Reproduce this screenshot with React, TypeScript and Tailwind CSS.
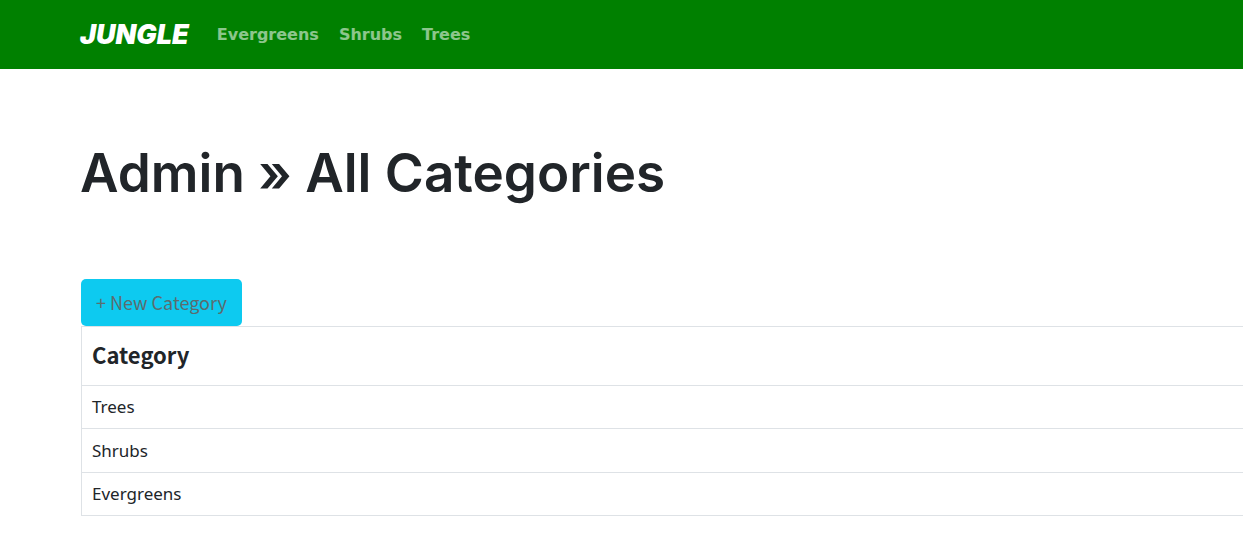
const navLinks = ["Evergreens", "Shrubs", "Trees"];
const categories = ["Trees", "Shrubs", "Evergreens"];

export default function App() {
  return (
    <div className="min-h-screen overflow-x-hidden bg-white font-['Noto_Sans',sans-serif] text-[17px] leading-[26px] text-[#212529]">
      <nav
        aria-label="Main"
        className="flex h-[69px] items-center bg-[#008000] pl-20"
      >
        <a
          href="#"
          className="mr-7 font-['Inter','Lato',sans-serif] text-[27px] font-black text-white italic"
        >
          JUNGLE
        </a>
        <ul className="flex gap-5 font-['DejaVu_Sans',sans-serif] text-base font-bold text-white/55">
          {navLinks.map((name) => (
            <li key={name}>
              <a href="#">{name}</a>
            </li>
          ))}
        </ul>
      </nav>

      <main className="pl-20">
        <header className="pt-[74px] pb-[76px]">
          <h1 className="font-['Inter',sans-serif] text-[53px] leading-[60px] font-semibold whitespace-nowrap">
            Admin » All Categories
          </h1>
        </header>

        <div className="pl-px">
          <button
            type="button"
            className="block h-[47px] rounded-[5px] bg-[#0dcaf0] px-[15px] pb-0.5 font-['Noto_Sans_CJK_SC',sans-serif] text-lg leading-7 text-[#5c6c6f]"
          >
            + New Category
          </button>

          <table className="w-full border-collapse border-t border-l border-[#dee2e6] text-left">
            <thead>
              <tr className="h-[59px] border-b border-[#dee2e6]">
                <th
                  scope="col"
                  className="px-2.5 pb-1 font-['Noto_Sans_CJK_SC',sans-serif] text-[22px] leading-8 font-bold"
                >
                  Category
                </th>
              </tr>
            </thead>
            <tbody>
              {categories.map((name) => (
                <tr
                  key={name}
                  className="h-[43px] border-b border-[#dee2e6] even:h-11"
                >
                  <td className="px-2.5">{name}</td>
                </tr>
              ))}
            </tbody>
          </table>
        </div>
      </main>
    </div>
  );
}
